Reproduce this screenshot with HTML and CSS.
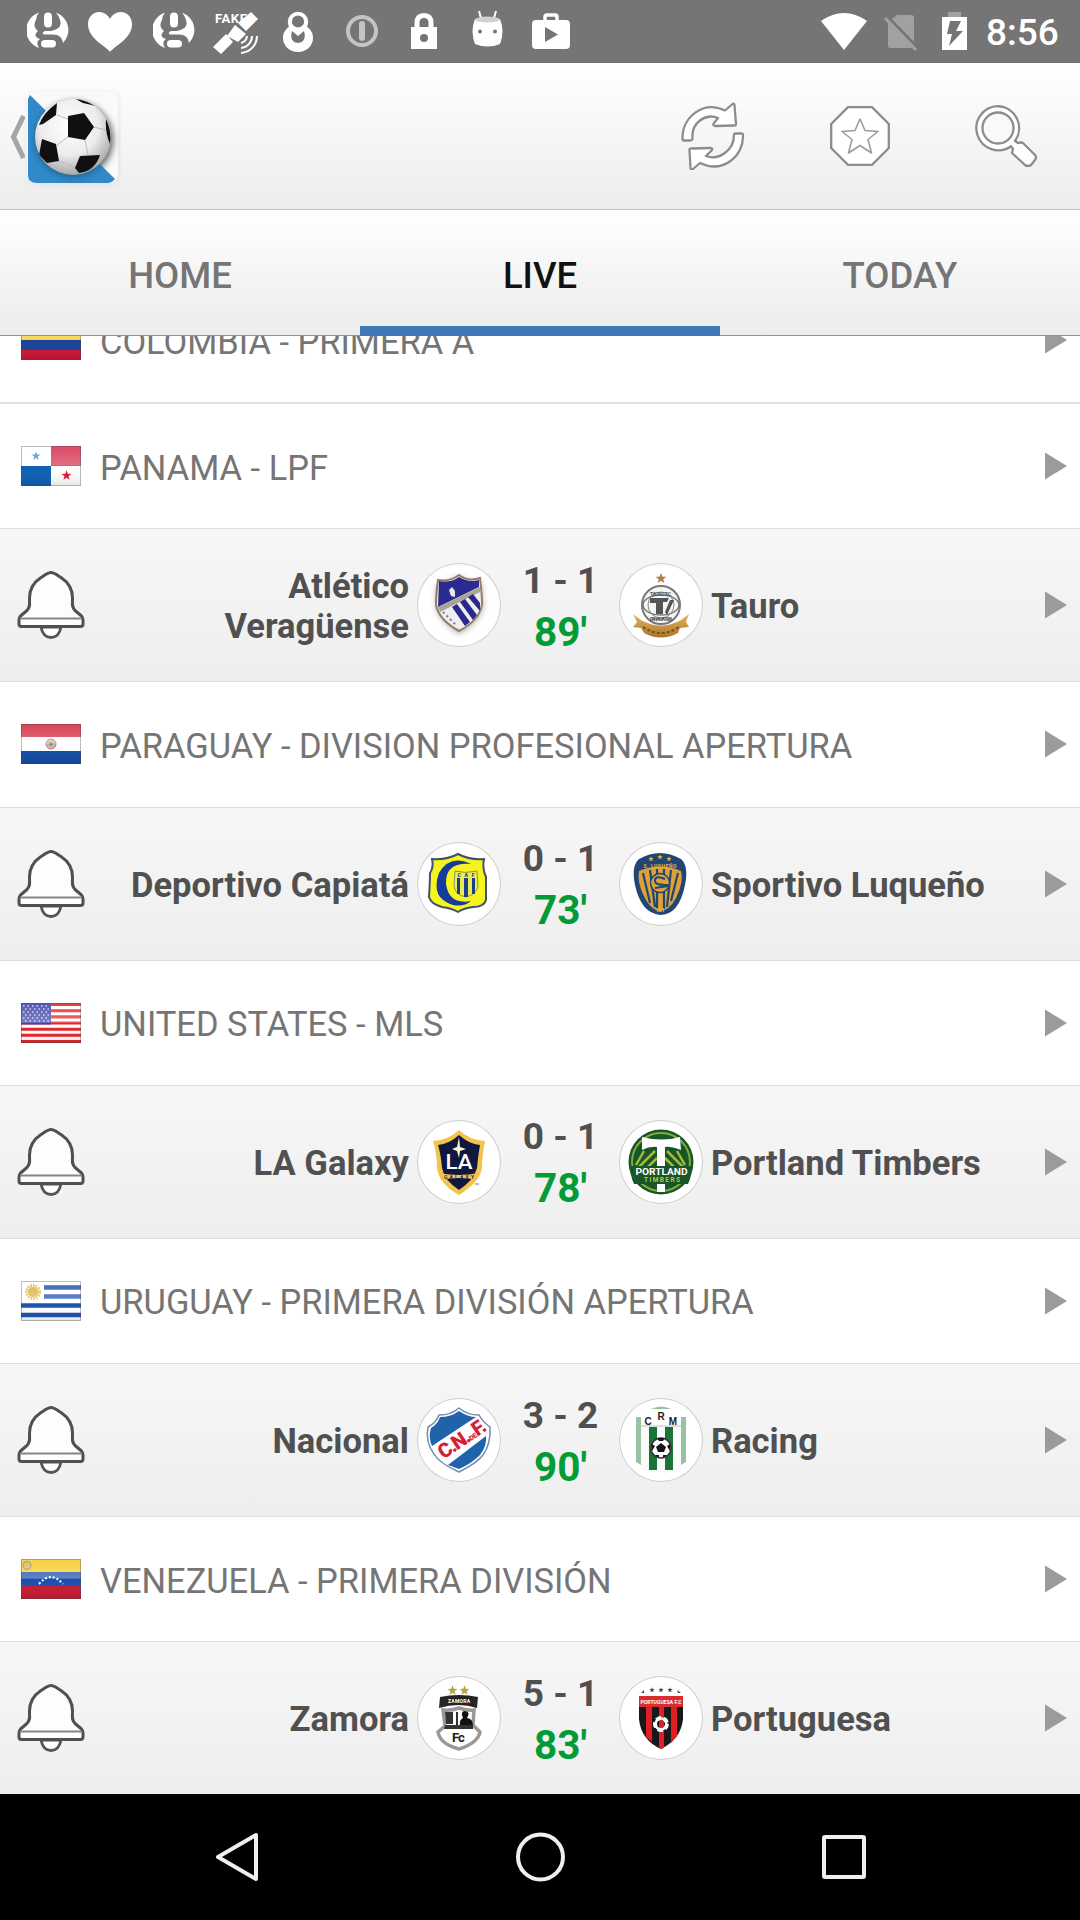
FILE: index.html
```html
<!DOCTYPE html>
<html lang="en">
<head>
<meta charset="utf-8">
<title>Live scores</title>
<link rel="stylesheet" href="styles.css">
</head>
<body>
<svg class="defs" width="0" height="0" aria-hidden="true">
  <defs>
    <linearGradient id="gloss" x1="0" y1="0" x2="0" y2="1">
      <stop offset="0" stop-color="#fff" stop-opacity=".12"/><stop offset=".48" stop-color="#fff" stop-opacity=".3"/>
      <stop offset=".5" stop-color="#fff" stop-opacity="0"/><stop offset="1" stop-color="#000" stop-opacity=".1"/>
    </linearGradient>
    <linearGradient id="gold" x1="0" y1="0" x2="0" y2="1"><stop offset="0" stop-color="#e8b95c"/><stop offset="1" stop-color="#a8742c"/></linearGradient>
    <radialGradient id="ballshade" cx=".45" cy=".35" r=".65">
      <stop offset="0" stop-color="#fff"/><stop offset=".6" stop-color="#ececec"/><stop offset="1" stop-color="#a8a8a8"/>
    </radialGradient>
    <clipPath id="ballclip"><circle cx="74" cy="74" r="38"/></clipPath>
    <filter id="soft" x="-30%" y="-30%" width="160%" height="160%"><feGaussianBlur stdDeviation="3"/></filter>
    <symbol id="frame" viewBox="0 0 60 40"><rect width="60" height="40" fill="url(#gloss)"/><rect x=".5" y=".5" width="59" height="39" fill="none" stroke="#444" stroke-opacity=".35"/></symbol>
    <symbol id="star" viewBox="-10 -10 20 20"><path d="M0-9.5 2.3-3.1 9-2.9 3.7 1.2 5.6 7.7 0 3.9-5.6 7.7-3.7 1.2-9-2.9-2.3-3.1Z"/></symbol>
    <symbol id="bell" viewBox="0 0 68 70">
      <path d="M24 57Q26 67.500 34 67.500T44 57Z" fill="#fff" stroke="#555" stroke-width="2.800"/>
      <path d="M34 2.500C31 2.500 28 5 24 7.500C15 13.500 12.500 20 12.500 28C12.500 34 13.500 37 10 40.500L3.500 46Q2 47.500 2 50V54Q2 56.500 4.500 56.500H63.500Q66 56.500 66 54V50Q66 47.500 64.500 46L58 40.500C54.500 37 55.500 34 55.500 28C55.500 20 53 13.500 44 7.500C40 5 37 2.500 34 2.500Z" fill="#fdfdfd" stroke="#505050" stroke-width="3" stroke-linejoin="round"/>
      <path d="M3.500 48.500H64.500" stroke="#858585" stroke-width="2"/>
    </symbol>
    <symbol id="arrow" viewBox="0 0 24 28"><path d="M1 .5 23 14 1 27.500Z" fill="#9b9b9b"/></symbol>
    <symbol id="gmark" viewBox="0 0 42 40">
      <path d="M12 1.500A20 19 0 0 0 12 37Q8 31 13 28Q5 25 11 20Q5 15 9 9Q9 5 12 1.500ZM29 1.500A20 19 0 0 1 36 32Q35 23 25 23.500H17Q14 22 18 20H24Q36 18 33 9Q32 5 29 1.500Z" fill="#fff"/>
      <rect x="17" y="1.500" width="8" height="15" rx="4" fill="#fff"/><rect x="14" y="29" width="15" height="7.500" rx="4" fill="#fff"/>
    </symbol>
  </defs>
</svg>

<div class="screen">
  <header class="status">
    <div class="status-left">
      <svg width="42" height="40"><use href="#gmark"/></svg>
      <svg class="s-heart" width="46" height="42" viewBox="0 0 46 42"><path d="M23 41C19 35 1 28 1 13C1 6 6 1 12 1C17 1 21 4 23 8C25 4 29 1 34 1C40 1 45 6 45 13C45 28 27 35 23 41Z" fill="#fff"/></svg>
      <svg class="s-g2" width="42" height="40"><use href="#gmark"/></svg>
      <svg class="s-fake" width="46" height="44" viewBox="0 0 46 44"><text x="2" y="12" class="fake" textLength="32">FAKE</text><g fill="#fff"><path d="m25 12 13-11 7 7-12 12ZM14 25 22 14 33 23 25 31ZM0 36 13 23 20 31 8 43Z"/></g><g fill="none" stroke="#fff" stroke-width="2"><path d="M28 32a8 8 0 0 0 6-7M28 37a12 12 0 0 0 11-12M28 42a17 17 0 0 0 16-17"/></g></svg>
      <svg class="s-eight" width="30" height="42" viewBox="0 0 30 42"><circle cx="15" cy="11" r="8" fill="none" stroke="#fff" stroke-width="4.500"/><path fill-rule="evenodd" fill="#fff" d="M15 13A15 14 0 1 0 15 41A15 14 0 1 0 15 13ZM9 20 15 25 21 20Q24 31 15 32Q6 31 9 20Z"/><circle cx="15" cy="10.500" r="6" fill="#757575"/></svg>
      <svg class="s-one" width="32" height="32" viewBox="0 0 32 32"><circle cx="16" cy="16" r="14" fill="none" stroke="#c4c4c4" stroke-width="4"/><path d="M16 9V23" stroke="#c4c4c4" stroke-width="6" stroke-linecap="round"/></svg>
      <svg class="s-lock" width="26" height="37" viewBox="0 0 26 37"><path d="M6 16V10Q6 2.500 13 2.500T20 10V16" fill="none" stroke="#fff" stroke-width="5"/><rect y="14" width="26" height="22" fill="#fff"/><circle cx="13" cy="25" r="4" fill="#757575"/></svg>
      <svg class="s-droid" width="32" height="37" viewBox="0 0 32 37"><path d="M7 0 9.500 9M24 0 21.500 9" stroke="#fff" stroke-width="2"/><path d="M3 8H28Q33 20 28 33Q16 38 3 33Q-2 20 3 8Z" fill="#fff"/><ellipse cx="15.500" cy="8.500" rx="12.500" ry="3" fill="#d0d0d0"/><circle cx="8" cy="20.500" r="2" fill="#757575"/><circle cx="23" cy="20.500" r="2" fill="#757575"/></svg>
      <svg class="s-play" width="38" height="36" viewBox="0 0 38 36"><path d="M13 8V4Q13 2 15 2H23Q25 2 25 4V8" fill="none" stroke="#fff" stroke-width="3.500"/><rect y="7" width="38" height="29" rx="4" fill="#fff"/><path d="M13 14V29L26 21.500Z" fill="#757575"/></svg>
    </div>
    <div class="status-right">
      <svg width="46" height="37" viewBox="0 0 46 37"><path d="M0 8Q23-8 46 8L23 37Z" fill="#fff"/></svg>
      <svg class="s-sim" width="34" height="37" viewBox="0 0 34 37"><path d="M10 4 13 1H27Q30 1 30 4V30ZM4 9 4 31Q4 34 7 34H28Z" fill="#a1a1a1"/><path d="M9 3 31 27V31L4 5Z" fill="#757575"/><path d="M4 8 10 3 30 25V34H7Q4 34 4 31Z" fill="#a1a1a1"/><path d="M4 3 33 33" stroke="#757575" stroke-width="3"/><path d="M1 4 32 36" stroke="#a1a1a1" stroke-width="3"/></svg>
      <svg class="s-bat" width="25" height="38" viewBox="0 0 25 38"><path d="M6 0H19V5H6Z" fill="#a1a1a1"/><path d="M0 5H25V38H0Z" fill="#fff"/><path d="M8 9H19L14 19H21L7 34 10 22H5Z" fill="#757575"/></svg>
      <span class="clock">8:56</span>
    </div>
  </header>

  <div class="appbar">
    <svg class="back" width="15" height="44" viewBox="0 0 15 44"><path d="M13.500 1 3.500 22 13.500 43" fill="none" stroke="#a5a5a5" stroke-width="5"/></svg>
    <svg class="logo" width="100" height="104" viewBox="22 22 100 104">
      <rect x="29" y="30" width="91" height="91" rx="8" fill="#999" opacity=".2" filter="url(#soft)"/>
      <rect x="28" y="29" width="91" height="91" rx="8" fill="#fafafa"/>
      <circle cx="77" cy="77" r="38" fill="#444" opacity=".55" filter="url(#soft)"/>
      <path d="M31 32 116 116Q113 120 108 120H38Q29 120 29 112V36Z" fill="#3089c8"/>
      <circle cx="74" cy="76" r="38" fill="#123" opacity=".4" filter="url(#soft)"/>
      <circle cx="74" cy="74" r="38" fill="url(#ballshade)"/>
      <g clip-path="url(#ballclip)"><path d="M69 53 85 50 95 64 86 77 69 74ZM40 62Q44 50 58 40L57 52 44 61ZM73 34Q86 34 97 43L84 40ZM107 56Q113 69 111 81Q106 70 107 56ZM43 76 57 81 60 98 48 100 40 92ZM81 93 101 92Q96 108 80 110L76 105Z" fill="#101010"/><path d="m58 52 11 4M69 74 58 82M86 77 89 92M60 98 76 104M95 64 107 67" fill="none" stroke="#bbb" stroke-width="1"/></g>
    </svg>
    <div class="actions">
      <svg width="64" height="68" viewBox="0 0 64 68" fill="#fff" stroke="#8c8c8c" stroke-width="2.300" stroke-linejoin="round"><path d="M1.500 37C1 15 22-2 44 8.500L51 2.500Q53 .5 53.500 3L55 22Q55 24 53 23.500L34 24Q31 23 33 21L37 16C25 11 10 20 11.500 37Q11 38.500 9 38.500H3Q1.500 38.500 1.500 37Z"/><path d="M62 33C63 54 42 72 19 61L12 67Q10 68 9.500 66L8.500 48Q8 46 11 46.500L29 46Q32 46 31 48L25 54C38 59 53 48 53 33Q53 31.500 54.500 31.500H60.500Q62 31.500 62 33Z"/></svg>
      <svg width="60" height="60" viewBox="0 0 60 60"><path d="M18 1.200H42L58.800 18V42L42 58.800H18L1.200 42V18Z" fill="#fff" stroke="#8c8c8c" stroke-width="2.300"/><path d="M30 13 35 24.500 48 25.500 38 33.500 41.500 47 30 39.500 18.500 47 22 33.500 12 25.500 25 24.500Z" fill="#fff" stroke="#9a9a9a" stroke-width="1.500" stroke-linejoin="round"/></svg>
      <svg width="62" height="62" viewBox="0 0 62 62" fill="#fff" stroke="#8c8c8c" stroke-width="2.300"><path d="M23 1.200a22 22 0 1 0 13 40L38 44 37 48 50 60Q53 62 56 60L60 55Q62 52 60 50L48 38Q46 37 43 38L40 36A22 22 0 0 0 23 1.200Z" stroke-linejoin="round"/><circle cx="23" cy="23" r="15.500" fill="#f9f9f9"/></svg>
    </div>
  </div>

  <nav class="tabs"><span class="tab">HOME</span><span class="tab active">LIVE</span><span class="tab">TODAY</span></nav>

  <main class="list">
    <div class="league first"><svg class="flag" viewBox="0 0 60 40"><path fill="#f7ca1c" d="M0 0H60V20H0Z"/><path fill="#1a4197" d="M0 20H60V30H0Z"/><path fill="#cb1537" d="M0 30H60V40H0Z"/><use href="#frame"/></svg><span>COLOMBIA - PRIMERA A</span><svg class="arrow"><use href="#arrow"/></svg></div>

    <div class="league"><svg class="flag" viewBox="0 0 60 40"><path fill="#fff" d="M0 0H60V40H0Z"/><path fill="#d5304f" d="M30 0H60V20H30Z"/><path fill="#0c60b3" d="M0 20H30V40H0Z"/><use href="#star" x="10" y="5" width="10" height="10" fill="#4b93cf"/><use href="#star" x="40" y="24" width="11" height="11" fill="#d51f38"/><use href="#frame"/></svg><span>PANAMA - LPF</span><svg class="arrow"><use href="#arrow"/></svg></div>
    <div class="match">
      <svg class="bell"><use href="#bell"/></svg><span class="team home">Atlético<br>Veragüense</span>
      <svg class="crest" viewBox="0 0 84 84"><path d="M20 21Q30 22 42 13Q52 22 64 19L66 42Q65 57 42 71Q22 57 19 44Z" fill="#777" opacity=".6" filter="url(#soft)"/><path d="M21 17Q33 19 42 12Q51 19 63 15Q65 31 65 41Q63 57 42 68Q22 57 19 42Q19 31 21 17Z" fill="#eee" stroke="#937e67" stroke-width="2"/><path d="M22 18Q34 20 42 14Q52 20 62 17V24L21 44Z" fill="#2b2a91"/><path d="M21 44 63 24V29L23 49Z" fill="#aaa597"/><path d="m35 44 5-3 13 18-5 4ZM43 39l5-3 12 16-4 5ZM51 34l5-3 7 9v8Z" fill="#29288e"/><path d="m26 49 14 14" stroke="#77758f" stroke-width="2" stroke-dasharray="2 3"/><path d="m32 27 3-3 3 4v6l-4-1Z" fill="#e7e8f5"/></svg>
      <div class="score"><span>1 - 1</span><b>89'</b></div>
      <svg class="crest" viewBox="0 0 84 84"><use href="#star" x="36" y="9" width="12" height="13" fill="#a78140"/><path d="M14 51 22 57Q42 68 62 57L70 51 67 59 70 64 61 65 59 70Q42 79 25 70L22 65 14 64 18 59Z" fill="url(#gold)"/><circle cx="42" cy="42" r="19" fill="#f5f5f5" stroke="#777" stroke-width="2"/><ellipse cx="42" cy="42" rx="18" ry="10" fill="none" stroke="#777" stroke-width="1.500"/><circle cx="42" cy="42" r="13" fill="none" stroke="#888"/><path d="M31 35H50L48 39H44V51H37V40H31ZM51 37h4l-7 15-2-3Z" fill="#555"/><text x="42" y="33" class="tiny" textLength="22">TAURO F.C.</text><text x="42" y="58" class="tiny" textLength="22">PANAMA 1984</text><path d="M24 64Q42 76 60 64" fill="none" stroke="#765020" stroke-width="2" stroke-dasharray="3 2"/></svg>
      <span class="team away">Tauro</span><svg class="arrow"><use href="#arrow"/></svg>
    </div>

    <div class="league"><svg class="flag" viewBox="0 0 60 40"><path fill="#fff" d="M0 0H60V40H0Z"/><path fill="#d52b40" d="M0 0H60V13H0Z"/><path fill="#114ba5" d="M0 27H60V40H0Z"/><ellipse cx="30" cy="20" rx="5" ry="5" fill="#d2b6aa" stroke="#b57771"/><circle cx="30" cy="20" r="2" fill="#7a9c69"/><use href="#frame"/></svg><span>PARAGUAY - DIVISION PROFESIONAL APERTURA</span><svg class="arrow"><use href="#arrow"/></svg></div>
    <div class="match">
      <svg class="bell"><use href="#bell"/></svg><span class="team home">Deportivo Capiatá</span>
      <svg class="crest" viewBox="0 0 84 84"><path d="M15 17Q30 18 41 12Q52 18 67 17Q65 26 69 35V58Q67 65 56 65Q47 66 41 70Q34 66 25 65Q14 62 12 55Q13 39 13 31Q17 25 15 17Z" fill="#f5f51d" stroke="#405070" stroke-width="2"/><path d="M54 22Q33 12 22 31Q13 56 36 63Q47 65 54 59Q32 63 29 42Q28 20 54 22Z" fill="#173b99"/><path d="M38 29Q48 32 60 29L61 45Q58 53 49 55Q38 53 37 44Z" fill="#e9ed50" stroke="#8b9154"/><path d="M40 36H43V52H40ZM47 36H51V55H47ZM55 36H58V52H55Z" fill="#1d3c8c"/><text x="49" y="35" class="tiny navy" textLength="17">C A F</text></svg>
      <div class="score"><span>0 - 1</span><b>73'</b></div>
      <svg class="crest" viewBox="0 0 84 84"><path d="M20 17Q41 5 62 17Q70 24 66 43Q60 73 41 73Q22 71 16 43Q12 24 20 17Z" fill="#204675"/><path d="M20 29Q41 20 62 29Q65 40 57 56Q50 69 41 69Q31 68 24 52Q18 39 20 29Z" fill="#dda137"/><path d="m24 31 7 30M31 28 36 65M38 27V67M45 27V67M52 28 48 65M59 31 52 59" stroke="#204675" stroke-width="2.200"/><circle cx="41" cy="41" r="9.500" fill="#dda137" stroke="#204675" stroke-width="1.500"/><path d="M46 37Q37 33 36 38T46 43T36 46" fill="none" stroke="#204675" stroke-width="2"/><g fill="#edb642"><use href="#star" x="29" y="14" width="6" height="6"/><use href="#star" x="38" y="12" width="6" height="6"/><use href="#star" x="47" y="14" width="6" height="6"/></g><text x="41" y="26" class="tiny yellow" textLength="33">S. LUQUEÑO</text><text x="41" y="70" class="tiny yellow" textLength="9">1921</text></svg>
      <span class="team away">Sportivo Luqueño</span><svg class="arrow"><use href="#arrow"/></svg>
    </div>

    <div class="league"><svg class="flag" viewBox="0 0 60 40"><path fill="#fff" d="M0 0H60V40H0Z"/><path stroke="#e62529" stroke-width="3.080" d="M0 1.500H60M0 7.700H60M0 13.850H60M0 20H60M0 26.200H60M0 32.300H60M0 38.500H60"/><path d="M0 0H30V21.500H0Z" fill="#4046a8"/><path d="M2 3H29M4 6H28M2 9H29M4 12H28M2 15H29M4 18H28" stroke="#c7c9ee" stroke-width="1.300" stroke-dasharray="1.500 3"/><use href="#frame"/></svg><span>UNITED STATES - MLS</span><svg class="arrow"><use href="#arrow"/></svg></div>
    <div class="match">
      <svg class="bell"><use href="#bell"/></svg><span class="team home">LA Galaxy</span>
      <svg class="crest" viewBox="0 0 84 84"><path d="M42 10Q52 20 68 21Q65 36 65 48Q63 62 42 75Q22 64 20 48Q20 33 16 21Q32 20 42 10Z" fill="#f3c44b"/><path d="M42 15Q52 24 63 25Q61 36 60 48Q57 60 42 70Q27 60 25 48Q24 35 21 25Q32 24 42 15Z" fill="#101841"/><path d="M42 17 43 27 49 29 43 31 42 38 40 31 35 29 40 27Z" fill="#fff6cb"/><text x="42" y="49" class="la" textLength="27" lengthAdjust="spacingAndGlyphs">LA</text><path d="M22 53Q42 57 62 53L60 60Q42 56 24 60Z" fill="#f3c44b"/><text x="42" y="59" class="tiny navy" textLength="30">GALAXY</text><path d="M58 64H62" stroke="#72779e"/></svg>
      <div class="score"><span>0 - 1</span><b>78'</b></div>
      <svg class="crest" viewBox="0 0 84 84"><circle cx="42" cy="42" r="32.500" fill="#175629"/><circle cx="42" cy="42" r="29" fill="none" stroke="#82ac36" stroke-width="2"/><path d="m18 49 18-18M28 48l10-10M66 49 48 31M56 48 46 38M25 31 17 45M58 31 66 45" stroke="#a3ba38" stroke-width="2.500"/><path d="M23 17Q43 22 61 17L62 30Q51 26 46 27V72H38V27Q31 26 23 30Z" fill="#fff"/><path d="M10 46H74L71 59 69 64H15L13 59Z" fill="#175629"/><text x="42.500" y="55" class="portland" textLength="52" lengthAdjust="spacingAndGlyphs">PORTLAND</text><text x="43" y="62" class="timbers" textLength="36">TIMBERS</text><path d="M38 64H46V72H38Z" fill="#fff"/></svg>
      <span class="team away">Portland Timbers</span><svg class="arrow"><use href="#arrow"/></svg>
    </div>

    <div class="league"><svg class="flag" viewBox="0 0 60 40"><path fill="#fff" d="M0 0H60V40H0Z"/><path stroke="#1b50b1" stroke-width="4.500" d="M23 6.600H60M23 15.500H60M0 24.500H60M0 34H60"/><circle cx="12" cy="11" r="6" fill="none" stroke="#dfb83f" stroke-width="4" stroke-dasharray="1.500 1"/><circle cx="12" cy="11" r="5" fill="#d9b143"/><use href="#frame"/></svg><span>URUGUAY - PRIMERA DIVISIÓN APERTURA</span><svg class="arrow"><use href="#arrow"/></svg></div>
    <div class="match">
      <svg class="bell"><use href="#bell"/></svg><span class="team home">Nacional</span>
      <svg class="crest" viewBox="0 0 84 84"><path d="M22 17Q34 17 42 10Q50 17 62 17Q66 24 73 29Q74 46 66 57Q60 65 42 74Q22 65 17 56Q8 44 11 29Q19 25 22 17Z" fill="#fff" stroke="#718daf" stroke-width="1.500"/><path d="M23 19Q34 19 42 13Q51 19 59 19L15 48Q11 39 14 30Q21 26 23 19ZM31 67 69 38Q70 48 63 57Q54 66 42 71Z" fill="#2163ab"/><text transform="translate(26.500 61.500) rotate(-34)" class="cn">C.N.<tspan class="de">DE</tspan>F.</text></svg>
      <div class="score"><span>3 - 2</span><b>90'</b></div>
      <svg class="crest" viewBox="0 0 84 84"><path d="M17 19H22V67L17 64ZM62 19H67V64L62 67ZM32 11Q42 6 52 11Z" fill="#98c2a4"/><path d="M22 29H62V71Q42 77 22 71Z" fill="#fafafa"/><path d="M30 29H38V72H30ZM46 29H54V72H46Z" fill="#187536"/><path d="M21 28H62" stroke="#bbb"/><circle cx="42" cy="50" r="10" fill="#fff" stroke="#333" stroke-width="1.500"/><path d="M42 45 47 49 45 54H39L37 49ZM38 40H46L44 43H40ZM33 46 36 48 33 53ZM51 46 48 48 51 53ZM36 57 40 57 40 60ZM48 57 44 57 44 60Z" fill="#171717"/><text x="29" y="26.500" class="crm">C</text><text x="42" y="22" class="crm">R</text><text x="54" y="26.500" class="crm">M</text></svg>
      <span class="team away">Racing</span><svg class="arrow"><use href="#arrow"/></svg>
    </div>

    <div class="league"><svg class="flag" viewBox="0 0 60 40"><path fill="#f4cc29" d="M0 0H60V13.300H0Z"/><path fill="#1d4eac" d="M0 13H60V27H0Z"/><path fill="#c71b35" d="M0 27H60V40H0Z"/><path d="M18 25Q30 11 42 25" fill="none" stroke="#fff" stroke-width="2" stroke-dasharray="2 2"/><ellipse cx="6" cy="6.500" rx="4" ry="4" fill="#d4bd65" stroke="#978a62"/><use href="#frame"/></svg><span>VENEZUELA - PRIMERA DIVISIÓN</span><svg class="arrow"><use href="#arrow"/></svg></div>
    <div class="match">
      <svg class="bell"><use href="#bell"/></svg><span class="team home">Zamora</span>
      <svg class="crest" viewBox="0 0 84 84"><use href="#star" x="30" y="9" width="11" height="11" fill="#b5a240"/><use href="#star" x="42" y="9" width="11" height="11" fill="#b5a240"/><path d="M23 21Q42 17 61 21L60 32Q42 26 22 32Z" fill="#242424"/><path d="M26 34Q34 35 42 32Q50 35 57 34L56 49 63 56Q61 67 42 73Q23 68 21 56L28 50Z" fill="#fff" stroke="#999" stroke-width="3.500"/><path d="M28 36H36V48H29ZM39 36H41V49H39ZM28 49H56V53H27Z" fill="#333"/><path d="M43 49Q42 44 46 42Q43 35 48 35Q54 36 50 42Q56 43 56 49Z" fill="#111"/><text x="42" y="26.500" class="tiny white" textLength="22">ZAMORA</text><text x="41" y="66" class="fc">Fc</text></svg>
      <div class="score"><span>5 - 1</span><b>83'</b></div>
      <svg class="crest" viewBox="0 0 84 84"><path d="M20 20H64V43Q62 63 42 73Q22 64 20 43Z" fill="#191719"/><path d="M20 20H64V31H20Z" fill="#d92c2f"/><path d="M27 31H33V66L27 61ZM40 31H45V72L42 73 40 72ZM52 31H58V60L52 67Z" fill="#e11e23"/><text x="42" y="28" class="tiny white" textLength="41">PORTUGUESA F.C</text><circle cx="42" cy="48" r="6" fill="none" stroke="#fff" stroke-width="4" stroke-dasharray="5 2.540"/><circle cx="42" cy="48" r="5.500" fill="none" stroke="#fff" stroke-width="2.500"/><g fill="#444"><use href="#star" x="30" y="11" width="6" height="6"/><use href="#star" x="39" y="11" width="6" height="6"/><use href="#star" x="48" y="11" width="6" height="6"/><path d="m22 17 3-3v3ZM58 14l4 3h-3Z"/></g></svg>
      <span class="team away">Portuguesa</span><svg class="arrow"><use href="#arrow"/></svg>
    </div>
  </main>

  <footer class="navbar">
    <svg viewBox="0 0 50 50"><path d="M45 3V47L7 25Z"/></svg>
    <svg viewBox="0 0 50 50"><circle cx="25.500" cy="25" r="22.500"/></svg>
    <svg viewBox="0 0 50 50"><rect x="5" y="5" width="40" height="40" rx="1"/></svg>
  </footer>
</div>
</body>
</html>
```

FILE: styles.css
```css
* { box-sizing: border-box; }
body { margin: 0; background: #fff; font-family: Roboto, "Liberation Sans", sans-serif; }
svg { display: block; flex: none; }
.defs { position: absolute; }
.screen { width: 1080px; height: 1920px; display: flex; flex-direction: column; overflow: hidden; }

.status { height: 63px; flex: none; background: #757575; display: flex; justify-content: space-between; }
.status-left { display: flex; align-items: flex-start; padding: 11px 0 0 27px; }
.s-heart { margin-left: 18px; }
.s-g2 { margin-left: 20px; }
.s-fake { margin-left: 18px; }
.s-eight { margin-left: 24px; }
.s-one { margin: 4px 0 0 33px; }
.s-lock { margin: 2px 0 0 33px; }
.s-droid { margin-left: 35px; }
.s-play { margin: 2px 0 0 28px; }
.fake { font: 700 13px Roboto, sans-serif; fill: #fff; }
.status-right { display: flex; align-items: flex-start; padding: 13px 22px 0 0; }
.s-sim { margin: 1px 0 0 17px; }
.s-bat { margin: -1px 0 0 24px; }
.clock { width: 72px; margin: -2px 0 0 19px; font-size: 37px; line-height: 44px; font-weight: 500; color: #fff; white-space: nowrap; }

.appbar { height: 147px; flex: none; display: flex; align-items: center; background: linear-gradient(#fff, #ededed); border-bottom: 1px solid #c1c1c1; padding: 0 43px 0 10px; }
.back { margin-top: 1px; }
.logo { margin: 1px 0 0 -4px; }
.actions { margin-left: auto; display: flex; align-items: center; gap: 85px; }
.tabs { height: 126px; flex: none; display: flex; background: linear-gradient(#fff, #ececec); border-bottom: 1px solid #939393; }
.tab { flex: 1; height: 126px; padding-top: 14px; display: flex; align-items: center; justify-content: center; font-size: 36.500px; font-weight: 500; color: #757575; border-bottom: 10px solid transparent; }
.tab.active { color: #111; border-bottom-color: #4078b8; }

.list { flex: none; height: 1458px; overflow: hidden; background: #fff; }
.league { height: 124.250px; display: flex; align-items: center; padding: 0 12px 0 20.500px; color: #757575; font-size: 34.450px; }
.league.first { height: 126px; margin-top: -58px; border-bottom: 2px solid #e1e1e1; }
.league span { margin: 3px 0 0 19.500px; white-space: nowrap; }
.flag { width: 60px; height: 40px; }
.arrow { width: 24px; height: 28px; margin-left: auto; }
.match { height: 154px; display: flex; align-items: center; padding: 0 12px 0 17px; background: linear-gradient(#f7f7f7, #eee); border-top: 1px solid #dedede; border-bottom: 1px solid #dedede; }
.bell { width: 68px; height: 70px; }
.team { font-size: 34.550px; line-height: 40px; font-weight: 700; color: #505050; white-space: nowrap; }
.home { width: 324px; text-align: right; padding-top: 2px; }
.away { margin-left: 8px; padding-top: 2px; }
.crest { width: 84px; height: 84px; margin-left: 8px; border-radius: 50%; background: #fff; box-shadow: inset 0 0 0 1px #ccc; }
.score { width: 118px; padding: 4px 0 0 1px; text-align: center; color: #505050; font-weight: 700; }
.score + .crest { margin-left: 0; }
.score span { display: block; font-size: 37px; line-height: 50px; }
.score b { display: block; font-size: 40.500px; line-height: 53px; font-weight: 700; color: #039b35; }

.tiny { font: 700 5px Roboto, sans-serif; text-anchor: middle; fill: #555; }
.tiny.navy { fill: #1a2c69; }
.tiny.yellow { fill: #edb642; }
.tiny.white { fill: #fff; }
.la { font: 500 20px Roboto, sans-serif; text-anchor: middle; fill: #fff; }
.portland { font: 700 9px Roboto, sans-serif; text-anchor: middle; fill: #fff; }
.timbers { font: 700 6.500px Roboto, sans-serif; text-anchor: middle; fill: #b8c83a; }
.cn { font: 900 20px Roboto, sans-serif; letter-spacing: -1.500px; fill: #d81e35; }
.de { font-size: 7px; letter-spacing: -.5px; }
.crm { font: 700 10px "Liberation Sans", sans-serif; text-anchor: middle; fill: #222; }
.fc { font: 700 13px Roboto, sans-serif; letter-spacing: -1px; text-anchor: middle; fill: #222; }

.navbar { height: 126px; flex: none; background: #000; display: flex; justify-content: center; align-items: center; gap: 254px; }
.navbar svg { width: 50px; height: 50px; fill: none; stroke: #efefef; stroke-width: 4; stroke-linejoin: round; }
```
